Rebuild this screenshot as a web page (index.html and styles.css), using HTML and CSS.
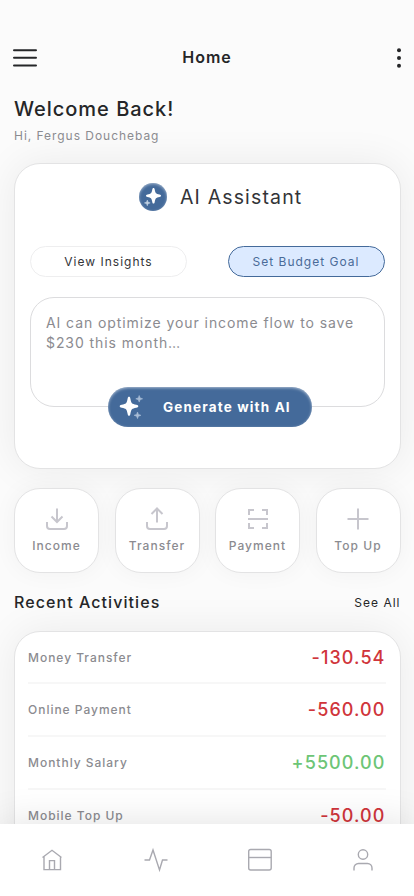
FILE: index.html
```html
<!DOCTYPE html>
<html lang="en">
<head>
<meta charset="utf-8">
<meta name="viewport" content="width=device-width, initial-scale=1">
<title>Home</title>
<link rel="stylesheet" href="styles.css">
</head>
<body>
<div class="screen">
  <header class="topbar">
    <svg class="menu" width="24" height="20" viewBox="0 0 24 20" stroke="#252628" stroke-width="2" stroke-linecap="round"><path d="M1 2.200h22M1 9.800h22M1 17.600h22"/></svg>
    <h1 class="title">Home</h1>
    <svg class="more" width="4" height="20" viewBox="0 0 4 20" fill="#252628"><circle cx="2" cy="2.200" r="2"/><circle cx="2" cy="10" r="2"/><circle cx="2" cy="17.800" r="2"/></svg>
  </header>
  <main class="content">
    <section class="welcome">
      <h2 class="hello">Welcome Back!</h2>
      <p class="name">Hi, Fergus Douchebag</p>
    </section>
    <section class="card assistant">
      <div class="assistant-head">
        <span class="badge"><svg width="28" height="28" viewBox="0 0 28 28"><path fill="#fff" d="M14.500 5c.8 0 1 .5 1.200 1.500.7 3.800 1.200 4.300 4.800 5 1 .2 1.500.5 1.500 1.200s-.5 1-1.500 1.200c-3.600.7-4.100 1.200-4.800 5-.2 1-.4 1.500-1.200 1.500s-1-.5-1.200-1.500c-.7-3.800-1.200-4.300-4.800-5-1-.2-1.500-.5-1.500-1.200s.5-1 1.500-1.200c3.600-.7 4.100-1.200 4.800-5 .2-1 .4-1.500 1.200-1.500z"/><path fill="#c3d2e3" d="M8.300 17l.7 2.100 2.200.8-2.200.8-.7 2.100-.7-2.100-2.200-.8 2.200-.8z" stroke="#c3d2e3" stroke-width=".5"/></svg></span>
        <h2 class="assistant-title">AI Assistant</h2>
      </div>
      <div class="choices">
        <button class="choice">View Insights</button>
        <button class="choice active">Set Budget Goal</button>
      </div>
      <div class="prompt">AI can optimize your income flow to save<br>$230 this month…</div>
      <button class="generate">
        <svg width="26" height="26" viewBox="0 0 26 26"><path fill="#fff" d="M10 2.800c.9 0 1.100.6 1.400 2 .9 4.600 1.400 5.100 5.900 6 1.300.3 2 .6 2 1.500s-.7 1.200-2 1.500c-4.500.9-5 1.400-5.900 6-.3 1.400-.5 2-1.400 2s-1.100-.6-1.400-2c-.9-4.600-1.400-5.100-5.900-6-1.300-.3-2-.6-2-1.500s.7-1.200 2-1.500c4.500-.9 5-1.400 5.900-6 .3-1.400.5-2 1.400-2z"/><path fill="#a9bdd6" stroke="#a9bdd6" stroke-width=".6" d="M20.200 1.500l.9 2.400 2.500.9-2.500.9-.9 2.400-.9-2.400-2.500-.9 2.500-.9zM18.500 18l.9 2.400 2.500.9-2.500.9-.9 2.400-.9-2.400-2.500-.9 2.500-.9z"/></svg>
        <span>Generate with AI</span>
      </button>
    </section>
    <section class="shortcuts">
      <a class="tile"><svg width="24" height="24" viewBox="0 0 24 24"><path d="M12 1.500v13.500M6.500 9.500l5.500 5.500 5.500-5.500M2 15v4a3 3 0 0 0 3 3h14a3 3 0 0 0 3-3v-4"/></svg><span>Income</span></a>
      <a class="tile"><svg width="24" height="24" viewBox="0 0 24 24"><path d="M12 15.500v-14M6.500 7l5.500-5.500 5.500 5.500M2 15v4a3 3 0 0 0 3 3h14a3 3 0 0 0 3-3v-4"/></svg><span>Transfer</span></a>
      <a class="tile"><svg width="24" height="24" viewBox="0 0 24 24"><path d="M3 8V3h5M16 3h5v5M21 16v5h-5M8 21H3v-5M2 12h20"/></svg><span>Payment</span></a>
      <a class="tile"><svg width="24" height="24" viewBox="0 0 24 24"><path d="M12 1.500v21M1.500 12h21"/></svg><span>Top Up</span></a>
    </section>
    <section class="section-head">
      <h2 class="recent">Recent Activities</h2>
      <a class="see-all">See All</a>
    </section>
    <section class="card activities">
      <div class="row"><span class="label">Money Transfer</span><span class="amount">-130.54</span></div>
      <div class="row"><span class="label">Online Payment</span><span class="amount">-560.00</span></div>
      <div class="row"><span class="label">Monthly Salary</span><span class="amount plus">+5500.00</span></div>
      <div class="row"><span class="label">Mobile Top Up</span><span class="amount">-50.00</span></div>
    </section>
  </main>
  <nav class="tabs">
    <svg width="26" height="26" viewBox="0 0 26 26"><path d="M2.500 10.500L12 3.300l9.500 7.200M4 9.800v12.800h16.500V9.800M9.500 22.600v-9h5v9"/></svg>
    <svg width="26" height="26" viewBox="0 0 26 26"><path d="M1.500 13h5L10 3l6.500 20 3-10h5"/></svg>
    <svg width="26" height="26" viewBox="0 0 26 26"><rect x="2.700" y="2.500" width="22.500" height="20.500" rx="2"/><path d="M2.700 10.500h22.500"/></svg>
    <svg width="26" height="26" viewBox="0 0 26 26"><circle cx="14" cy="7.500" r="4.700"/><path d="M5 23.500v-2.500a4.500 4.500 0 0 1 4.500-4.500h9a4.500 4.500 0 0 1 4.500 4.500v2.500"/></svg>
  </nav>
</div>
</body>
</html>
```
FILE: styles.css
```css
* { box-sizing: border-box; }
body { margin: 0; font-family: Inter, "Liberation Sans", sans-serif; background: #fbfbfb; color: #252628; }
h1, h2, p { margin: 0; }
button { font: inherit; padding: 0; cursor: pointer; }
svg { display: block; flex: none; }
.screen { width: 414px; height: 896px; overflow: hidden; display: flex; flex-direction: column; }
.topbar { flex: none; height: 78px; padding: 38px 13px 0; display: grid; grid-template-columns: 24px 1fr 24px; align-items: center; }
.title { text-align: center; font-size: 16px; line-height: 20px; font-weight: 600; letter-spacing: 1px; padding-bottom: 2px; }
.more { justify-self: end; }
.content { flex: 1; min-height: 0; padding: 0 13.500px 0 14px; }
.welcome { height: 85px; padding-top: 17px; }
.hello { font-size: 20px; line-height: 28px; font-weight: 500; letter-spacing: .98px; }
.name { font-size: 12px; line-height: 16px; margin-top: 5px; letter-spacing: .96px; color: #8b8b90; }
.card { background: #fff; border: 1px solid #e3e3e4; border-radius: 26px; box-shadow: 0 0 40px rgba(0,0,0,.07); }
.assistant { height: 306px; padding: 19px 15px 0; display: flex; flex-direction: column; }
.assistant-head { display: flex; align-items: center; gap: 13px; padding-left: 109px; height: 28px; }
.badge { width: 28px; height: 28px; border-radius: 50%; background: #446a9a; box-shadow: inset 0 1px 3px rgba(255,255,255,.5); }
.assistant-title { font-size: 19.500px; font-weight: 400; letter-spacing: 1.150px; color: #333438; }
.choices { display: flex; justify-content: space-between; margin-top: 35px; }
.choice { width: 157px; height: 31px; border-radius: 16px; border: 1px solid #eeeeef; background: #fff; font-size: 12px; letter-spacing: 1px; color: #333438; }
.choice.active { background: #dceaff; border-color: #446a9a; color: #4a6b98; }
.prompt { height: 110px; margin-top: 20px; border: 1px solid #dcdcde; border-radius: 24px; padding: 15px; font-size: 14px; line-height: 20px; color: #8b8b90; white-space: nowrap; letter-spacing: .92px; }
.generate { position: relative; width: 204px; height: 40px; margin: -20px 0 0 78px; border: 0; border-radius: 20px; background: #446a9a; color: #fff; font-size: 13.500px; font-weight: 700; letter-spacing: 1.150px; display: flex; align-items: center; gap: 18px; padding-left: 11px; white-space: nowrap; box-shadow: inset 0 1px 3px rgba(255,255,255,.55); }
.shortcuts { display: flex; justify-content: space-between; margin-top: 19px; }
.tile { width: 85px; height: 85px; border: 1px solid #e3e3e4; border-radius: 26px; background: #fff; box-shadow: 0 0 25px rgba(0,0,0,.045); display: flex; flex-direction: column; align-items: center; padding-top: 18px; font-size: 12px; line-height: 16px; font-weight: 450; letter-spacing: 1.050px; color: #8b8b90; }
.tile span { margin-top: 7px; }
.tile svg { fill: none; stroke: #c7c6cd; stroke-width: 2; }
.section-head { display: flex; justify-content: space-between; align-items: center; height: 58px; }
.recent { font-size: 16px; font-weight: 500; letter-spacing: 1.070px; }
.see-all { font-size: 12px; letter-spacing: 1px; }
.activities { height: 224px; padding: 0 14px 0 13px; }
.row { height: 53px; display: flex; align-items: center; justify-content: space-between; border-bottom: 2px solid #f7f7f7; }
.row:first-child { height: 52px; }
.label { font-size: 12px; font-weight: 450; letter-spacing: .98px; color: #8b8b90; }
.amount { font-size: 18px; font-weight: 500; letter-spacing: 1.080px; color: #d0353b; }
.amount.plus { color: #6dc576; }
.tabs { flex: none; position: relative; height: 72px; background: #fff; display: grid; grid-template-columns: repeat(4, 1fr); justify-items: center; padding: 23px 0 0 1px; box-shadow: 0 0 40px rgba(0,0,0,.12); }
.tabs svg { fill: none; stroke: #a9a9b0; stroke-width: 1.400; }
```
